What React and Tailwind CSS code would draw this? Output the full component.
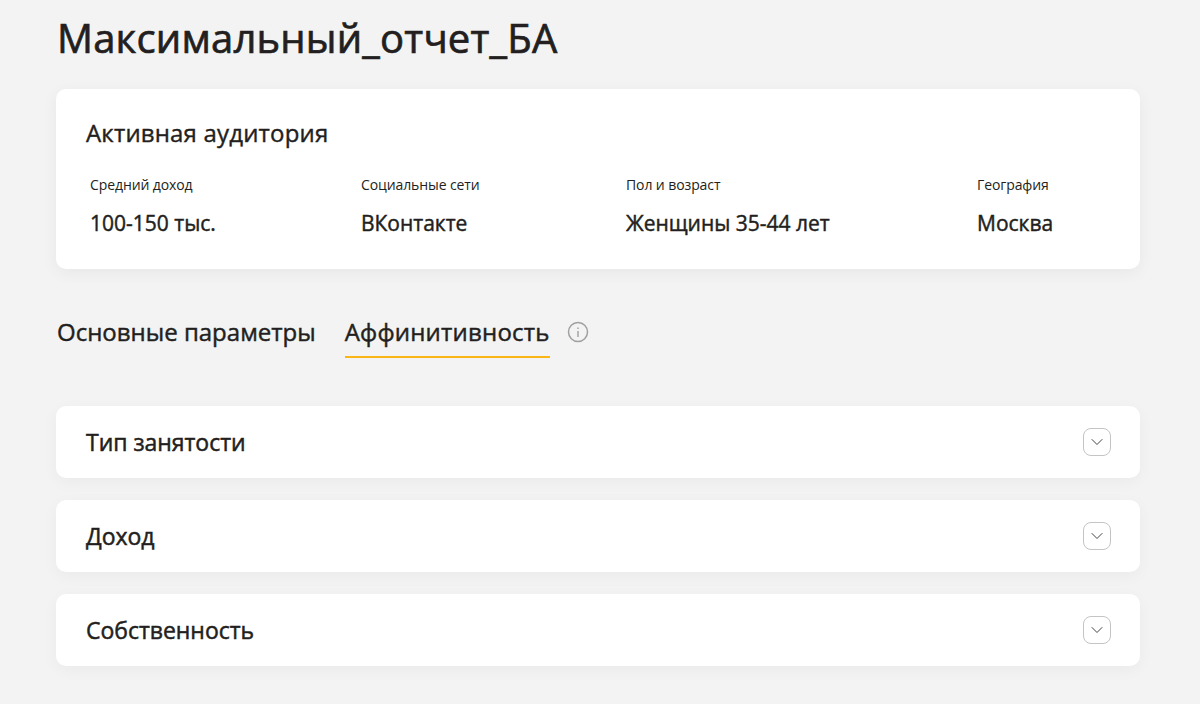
import { ChevronDown } from 'lucide-react';

const stats = [
  { label: 'Средний доход', value: '100-150 тыс.', cls: 'w-[271px]' },
  { label: 'Социальные сети', value: 'ВКонтакте', cls: 'w-[265px]' },
  { label: 'Пол и возраст', value: 'Женщины 35-44 лет', cls: 'w-[351px]' },
  { label: 'География', value: 'Москва', cls: '' },
];

const sections = ['Тип занятости', 'Доход', 'Собственность'];

export default function App() {
  return (
    <div className="h-[704px] overflow-hidden bg-[#f3f3f3] px-[56px] font-['Open_Sans',sans-serif] text-[#231f20]">
      <h1 className="pt-[12px] pl-px text-[40px] leading-[52px] tracking-[0.2px] [-webkit-text-stroke:0.7px]">Максимальный_отчет_БА</h1>

      {/* Active audience */}
      <div className="mt-[25px] h-[180px] w-[1084px] rounded-[10px] bg-white px-[30px] pt-[27px] shadow-[0_4px_16px_rgba(0,0,0,0.05)]">
        <h2 className="text-[24px] leading-[34px] tracking-[0.17px] [-webkit-text-stroke:0.4px]">Активная аудитория</h2>
        <div className="mt-[26px] flex pl-[4px]">
          {stats.map((s) => (
            <div key={s.label} className={s.cls}>
              <div className="text-[14px] leading-[18px] tracking-[-0.1px]">{s.label}</div>
              <div className="mt-[15px] text-[21px] leading-[28px] [-webkit-text-stroke:0.45px]">{s.value}</div>
            </div>
          ))}
        </div>
      </div>

      {/* Tabs */}
      <div className="mt-[43px] flex items-start">
        <div className="pl-px text-[24px] leading-[40px] [-webkit-text-stroke:0.45px]">Основные параметры</div>
        <div className="ml-[29px] h-[46px] border-b-2 border-[#fbb616] text-[24px] leading-[40px] tracking-[0.2px] [-webkit-text-stroke:0.45px]">
          Аффинитивность
        </div>
        <svg className="mt-[9px] ml-[17px]" width="22" height="22" viewBox="0 0 22 22" fill="none" stroke="#a0a0a0">
          <circle cx="11" cy="11" r="9.5" strokeWidth="1.5" />
          <path d="M11 10v6M11 6.5v1.5" strokeWidth="1.4" />
        </svg>
      </div>

      {/* Accordion */}
      <div className="mt-[48px] flex w-[1084px] flex-col gap-[22px]">
        {sections.map((title) => (
          <div key={title} className="flex h-[72px] items-center justify-between rounded-[10px] bg-white pr-[29px] pl-[30px] shadow-[0_4px_16px_rgba(0,0,0,0.04)]">
            <span className="text-[23px] leading-[30px] tracking-[-0.02px] [-webkit-text-stroke:0.5px]">{title}</span>
            <span className="flex h-[28px] w-[28px] items-center justify-center rounded-[8px] border border-[#c4c4c4] text-[#444]">
              <ChevronDown size={20} strokeWidth={1.2} />
            </span>
          </div>
        ))}
      </div>
    </div>
  );
}
